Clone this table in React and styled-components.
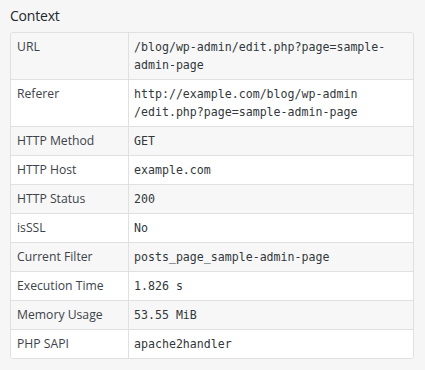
import React from "react";
import styled, { createGlobalStyle } from "styled-components";

const Global = createGlobalStyle`
  html, body { margin: 0; padding: 0; background: #f6f6f6; }
  body { font-family: "Open Sans", "Noto Sans", sans-serif; color: #3c434a; }
`;

const Panel = styled.section`
  padding: 5px 11px 10px 10px;
`;

const Heading = styled.h3`
  margin: 0 0 6px 0;
  font-size: 14px;
  font-weight: 400;
  line-height: 21px;
  letter-spacing: -0.2px;
  color: #23282d;
`;

const Table = styled.table`
  width: 100%;
  border-collapse: separate;
  border-spacing: 0;
  border: 1px solid #e0e0e0;
  border-radius: 3px;
  overflow: hidden;
  background: #fff;
`;

const Row = styled.tr`
  background: ${(p) => (p.$alt ? "#f7f7f7" : "#ffffff")};
`;

const Label = styled.th`
  width: 105px;
  text-align: left;
  vertical-align: top;
  font-weight: 400;
  font-size: 12.2px;
  line-height: 18px;
  padding: 5px 6px;
  color: #3c434a;
  border-right: 1px solid #e0e0e0;
  border-top: ${(p) => (p.$first ? "none" : "1px solid #e0e0e0")};
`;

const Value = styled.td`
  vertical-align: top;
  font-family: "DejaVu Sans Mono", "Liberation Mono", monospace;
  font-size: 11.6px;
  line-height: 18px;
  padding: 5px 5px;
  color: #32373c;
  border-top: ${(p) => (p.$first ? "none" : "1px solid #e0e0e0")};
`;

const rows = [
  ["URL", "/blog/wp-admin/edit.php?page=sample-admin-page"],
  [
    "Referer",
    <>
      http://example.com/blog/wp-admin
      <wbr />
      /edit.php?page=sample-admin-page
    </>,
  ],
  ["HTTP Method", "GET"],
  ["HTTP Host", "example.com"],
  ["HTTP Status", "200"],
  ["isSSL", "No"],
  ["Current Filter", "posts_page_sample-admin-page"],
  ["Execution Time", "1.826 s"],
  ["Memory Usage", "53.55 MiB"],
  ["PHP SAPI", "apache2handler"],
];

export default function App() {
  return (
    <>
      <Global />
      <Panel>
        <Heading>Context</Heading>
        <Table>
          <tbody>
            {rows.map(([k, v], i) => (
              <Row key={k} $alt={i % 2 === 0}>
                <Label $first={i === 0}>{k}</Label>
                <Value $first={i === 0}>{v}</Value>
              </Row>
            ))}
          </tbody>
        </Table>
      </Panel>
    </>
  );
}
